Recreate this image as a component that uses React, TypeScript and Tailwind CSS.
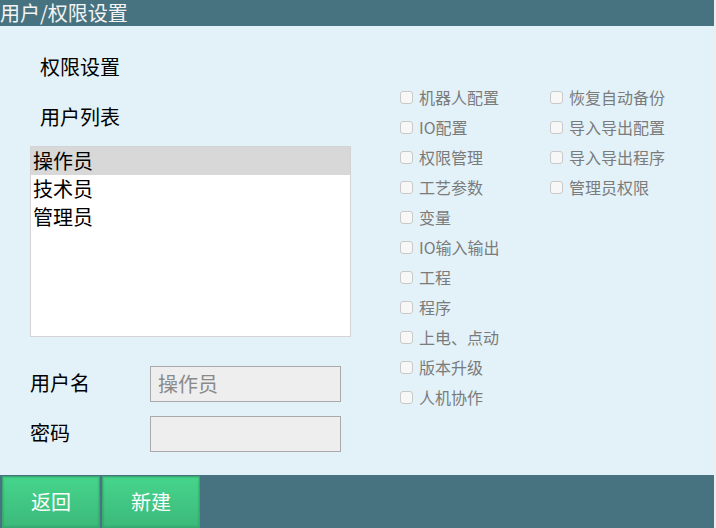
import React from "react";

const col1 = [
  "机器人配置",
  "IO配置",
  "权限管理",
  "工艺参数",
  "变量",
  "IO输入输出",
  "工程",
  "程序",
  "上电、点动",
  "版本升级",
  "人机协作",
];
const col2 = ["恢复自动备份", "导入导出配置", "导入导出程序", "管理员权限"];

function Check({ label }: { label: string }) {
  return (
    <label className="flex h-[30px] items-center gap-[6px]">
      <span className="block h-[13px] w-[13px] rounded-[3px] border border-[#c9c9c9] bg-[#f7f7f7]" />
      <span className="text-[16px] leading-[30px] text-[#7b7b7b]">{label}</span>
    </label>
  );
}

export default function App() {
  const font = { fontFamily: '"Noto Sans CJK SC", "Noto Sans", sans-serif' };
  return (
    <div className="h-[528px] w-[716px] overflow-hidden bg-[#eeeeee]" style={font}>
      <div className="flex h-[528px] w-[714px] flex-col bg-[#e3f2f8]">
        <div className="flex h-[26px] items-center bg-[#477380] text-[20px] leading-[24px] text-[#f4f4f4]">
          用户/权限设置
        </div>
        <div className="flex flex-1">
          <div className="flex w-[351px] flex-col pl-[30px] pt-[27px]">
            <div className="ml-[10px] text-[20px] leading-[28px] text-black">权限设置</div>
            <div className="ml-[10px] mt-[22px] text-[20px] leading-[28px] text-black">用户列表</div>
            <div className="mt-[15px] h-[191px] w-[321px] border border-[#d4d4d4] bg-white">
              <div className="h-[28px] bg-[#d8d8d8] pl-[2px] text-[20px] leading-[28px] text-black">操作员</div>
              <div className="h-[28px] pl-[2px] text-[20px] leading-[28px] text-black">技术员</div>
              <div className="h-[28px] pl-[2px] text-[20px] leading-[28px] text-black">管理员</div>
            </div>
            <div className="mt-[29px] flex items-center">
              <div className="w-[120px] pb-[3px] text-[20px] leading-[28px] text-black">用户名</div>
              <div className="flex h-[36px] w-[191px] items-center border border-[#aaaaaa] bg-[#eeeeee] pl-[7px] text-[20px] text-[#8a8a8a]">
                操作员
              </div>
            </div>
            <div className="mt-[14px] flex items-center">
              <div className="w-[120px] pb-[3px] text-[20px] leading-[28px] text-black">密码</div>
              <div className="h-[36px] w-[191px] border border-[#aaaaaa] bg-[#eeeeee]" />
            </div>
          </div>
          <div className="ml-[49px] flex pt-[56px]">
            <div className="flex w-[150px] flex-col">
              {col1.map((l) => (
                <Check key={l} label={l} />
              ))}
            </div>
            <div className="flex w-[150px] flex-col">
              {col2.map((l) => (
                <Check key={l} label={l} />
              ))}
            </div>
          </div>
        </div>
        <div className="flex h-[53px] gap-[2px] bg-[#477380] pl-[2px] pt-[1px]">
          <button className="h-[52px] w-[98px] border border-[#3aa872] bg-gradient-to-b from-[#46d58c] to-[#3cb97a] text-[20px] text-white shadow-[inset_0_0_2px_rgba(0,80,40,0.4)]">
            返回
          </button>
          <button className="h-[52px] w-[98px] border border-[#3aa872] bg-gradient-to-b from-[#46d58c] to-[#3cb97a] text-[20px] text-white shadow-[inset_0_0_2px_rgba(0,80,40,0.4)]">
            新建
          </button>
        </div>
      </div>
    </div>
  );
}
